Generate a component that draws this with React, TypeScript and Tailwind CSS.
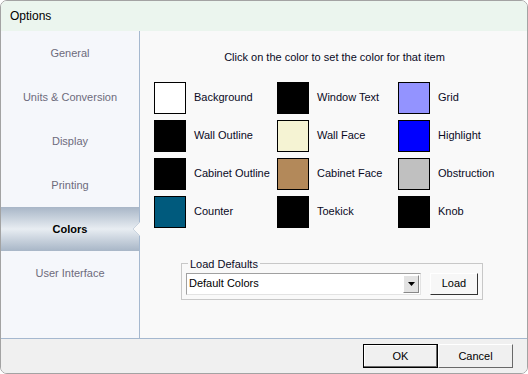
import React from "react";

const font = { fontFamily: '"Liberation Sans", Arial, sans-serif' };

const tabs = ["General", "Units & Conversion", "Display", "Printing", "Colors", "User Interface"];

const cols: { color: string; label: string }[][] = [
  [
    { color: "#ffffff", label: "Background" },
    { color: "#000000", label: "Wall Outline" },
    { color: "#000000", label: "Cabinet Outline" },
    { color: "#005a7d", label: "Counter" },
  ],
  [
    { color: "#000000", label: "Window Text" },
    { color: "#f5f3d3", label: "Wall Face" },
    { color: "#b3895a", label: "Cabinet Face" },
    { color: "#000000", label: "Toekick" },
  ],
  [
    { color: "#9393ff", label: "Grid" },
    { color: "#0000ff", label: "Highlight" },
    { color: "#c0c0c0", label: "Obstruction" },
    { color: "#000000", label: "Knob" },
  ],
];

function Swatch({ color, label }: { color: string; label: string }) {
  return (
    <div className="flex items-center h-[32px]">
      <div className="w-[32px] h-[32px] border border-black shrink-0" style={{ backgroundColor: color }} />
      <span className="ml-[8px] text-[11px] text-[#0a0a1e] whitespace-nowrap">{label}</span>
    </div>
  );
}

export default function App() {
  return (
    <div className="w-[528px] h-[374px] bg-white" style={font}>
      <div className="w-[528px] h-[374px] rounded-[7px] border border-[#a3a3a3] overflow-hidden flex flex-col">
        {/* Title bar */}
        <div className="h-[30px] bg-[#ebf5ee] flex items-center pl-[9px] text-[12px] text-black shrink-0">
          Options
        </div>
        {/* Middle */}
        <div className="h-[307px] flex shrink-0">
          {/* Left tabs */}
          <div className="w-[139px] bg-[#f5f7fb] border-r border-[#a5b8cf] flex flex-col shrink-0">
            {tabs.map((t) => {
              const sel = t === "Colors";
              return (
                <div
                  key={t}
                  className={
                    "relative h-[44px] flex items-center justify-center text-[11px] " +
                    (sel
                      ? "font-bold text-black bg-gradient-to-b from-[#a8b6c7] via-[#e8edf2] to-[#a8b6c7]"
                      : "text-[#6d6b7c]")
                  }
                >
                  {t}
                  {sel && (
                    <svg className="absolute right-[-1px] top-[15px]" width="8" height="14" viewBox="0 0 8 14">
                      <polygon points="8,0 1,7 8,14" fill="#f9f9f9" />
                      <polyline points="8,0 1,7 8,14" fill="none" stroke="#c9d3de" strokeWidth="1" />
                    </svg>
                  )}
                </div>
              );
            })}
          </div>
          {/* Right content */}
          <div className="flex-1 bg-[#f9f9f9] flex flex-col">
            <div className="pt-[18px] text-center text-[11px] text-[#0a0a1e] pl-[2px]">
              Click on the color to set the color for that item
            </div>
            <div className="flex pl-[14px] mt-[16px]">
              {cols.map((col, i) => (
                <div
                  key={i}
                  className={"flex flex-col gap-[6px] " + (i === 0 ? "w-[123px]" : i === 1 ? "w-[121px]" : "")}
                >
                  {col.map((s) => (
                    <Swatch key={s.label} color={s.color} label={s.label} />
                  ))}
                </div>
              ))}
            </div>
            <fieldset className="ml-[41px] mt-[30px] w-[302px] h-[42px] border border-[#c8c8c8] px-[4px] pb-[2px]">
              <legend className="ml-[2px] px-[2px] text-[11px] text-[#0a0a1e] leading-[12px]">Load Defaults</legend>
              <div className="flex items-center mt-[3px]">
                <div className="w-[235px] h-[22px] bg-white border border-t-[#a0a0a0] border-l-[#a0a0a0] border-r-[#e3e3e3] border-b-[#e3e3e3] flex items-center">
                  <span className="flex-1 pl-[2px] text-[11px] text-black">Default Colors</span>
                  <div className="w-[16px] h-[18px] mr-[1px] bg-[#e3e3e3] border border-t-white border-l-white border-r-[#888] border-b-[#888] flex items-center justify-center">
                    <svg width="7" height="4" viewBox="0 0 7 4">
                      <polygon points="0,0 7,0 3.5,4" fill="#000" />
                    </svg>
                  </div>
                </div>
                <button className="ml-[9px] w-[48px] h-[22px] bg-[#f7f7f7] border border-t-white border-l-white border-r-[#333] border-b-[#333] text-[11px] text-black flex items-center justify-center">
                  Load
                </button>
              </div>
            </fieldset>
          </div>
        </div>
        {/* Bottom bar */}
        <div className="flex-1 bg-[#f0f0f0] border-t border-[#a5b8cf] flex items-start justify-end pr-[14px] pt-[5px]">
          <button className="w-[75px] h-[24px] border border-black bg-[#f0f0f0] text-[11px] text-black flex items-center justify-center shadow-[inset_-1px_-1px_0_#696969,inset_1px_1px_0_#ffffff]">
            OK
          </button>
          <button className="w-[75px] h-[24px] bg-[#f0f0f0] border border-t-white border-l-white border-r-[#696969] border-b-[#696969] text-[11px] text-black flex items-center justify-center">
            Cancel
          </button>
        </div>
      </div>
    </div>
  );
}
